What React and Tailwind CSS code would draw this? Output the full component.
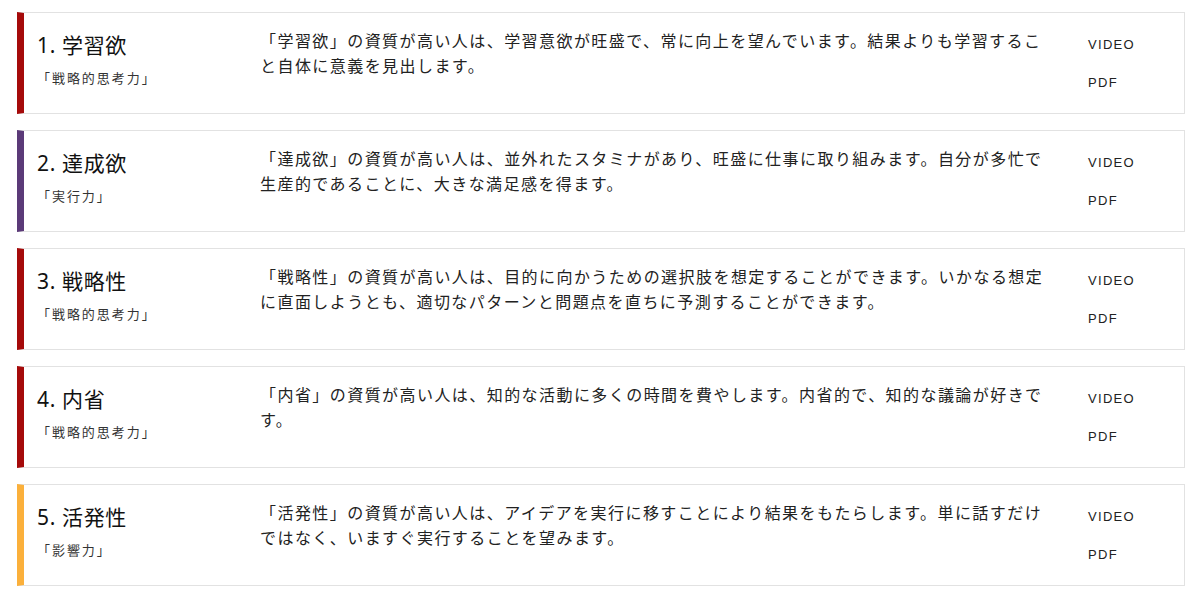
const strengths = [
    {
        id: 1,
        name: '学習欲',
        domain: '「戦略的思考力」',
        color: 'border-l-[#a50a0a]',
        text: '「学習欲」の資質が高い人は、学習意欲が旺盛で、常に向上を望んでいます。結果よりも学習すること自体に意義を見出します。',
    },
    {
        id: 2,
        name: '達成欲',
        domain: '「実行力」',
        color: 'border-l-[#5b3a78]',
        text: '「達成欲」の資質が高い人は、並外れたスタミナがあり、旺盛に仕事に取り組みます。自分が多忙で生産的であることに、大きな満足感を得ます。',
    },
    {
        id: 3,
        name: '戦略性',
        domain: '「戦略的思考力」',
        color: 'border-l-[#a50a0a]',
        text: '「戦略性」の資質が高い人は、目的に向かうための選択肢を想定することができます。いかなる想定に直面しようとも、適切なパターンと問題点を直ちに予測することができます。',
    },
    {
        id: 4,
        name: '内省',
        domain: '「戦略的思考力」',
        color: 'border-l-[#a50a0a]',
        text: '「内省」の資質が高い人は、知的な活動に多くの時間を費やします。内省的で、知的な議論が好きです。',
    },
    {
        id: 5,
        name: '活発性',
        domain: '「影響力」',
        color: 'border-l-[#fbb03b]',
        text: '「活発性」の資質が高い人は、アイデアを実行に移すことにより結果をもたらします。単に話すだけではなく、いますぐ実行することを望みます。',
    },
]

const StrengthCard = ({ item }) => {
    return (
        <div className={`flex h-[102px] border border-[#e2e2e2] border-l-[7px] ${item.color} bg-white`}>
            {/* Title */}
            <div className="w-[236px] shrink-0 pl-[13px] pt-[17px]">
                <h2 className="text-[21px] leading-[30px] text-[#111] tracking-[0.03em]">
                    {item.id}. {item.name}
                </h2>
                <p className="mt-[9px] text-[13px] leading-[18px] text-[#333] tracking-[0.15em]">
                    {item.domain}
                </p>
            </div>

            {/* Description */}
            <div className="w-[792px] shrink-0 pt-[16px]">
                <p className="text-[16px] leading-[25px] text-[#222] tracking-[0.09em]">
                    {item.text}
                </p>
            </div>

            {/* Links */}
            <div
                className="ml-[36px] flex flex-col pt-[22px] gap-[19px]"
                style={{ fontFamily: '"Liberation Sans", sans-serif' }}
            >
                <a href="#" className="text-[13px] leading-[19px] text-[#222] tracking-[0.1em]">VIDEO</a>
                <a href="#" className="text-[13px] leading-[19px] text-[#222] tracking-[0.1em]">PDF</a>
            </div>
        </div>
    )
}

const App = () => {
    return (
        <div
            className="min-h-screen bg-white px-[17px] pt-[12px]"
            style={{ fontFamily: '"Noto Sans", "Noto Sans CJK JP", sans-serif' }}
        >
            <div className="w-[1168px] flex flex-col gap-[16px]">
                {strengths.map(item => (
                    <StrengthCard key={item.id} item={item} />
                ))}
            </div>
        </div>
    )
}

export default App
